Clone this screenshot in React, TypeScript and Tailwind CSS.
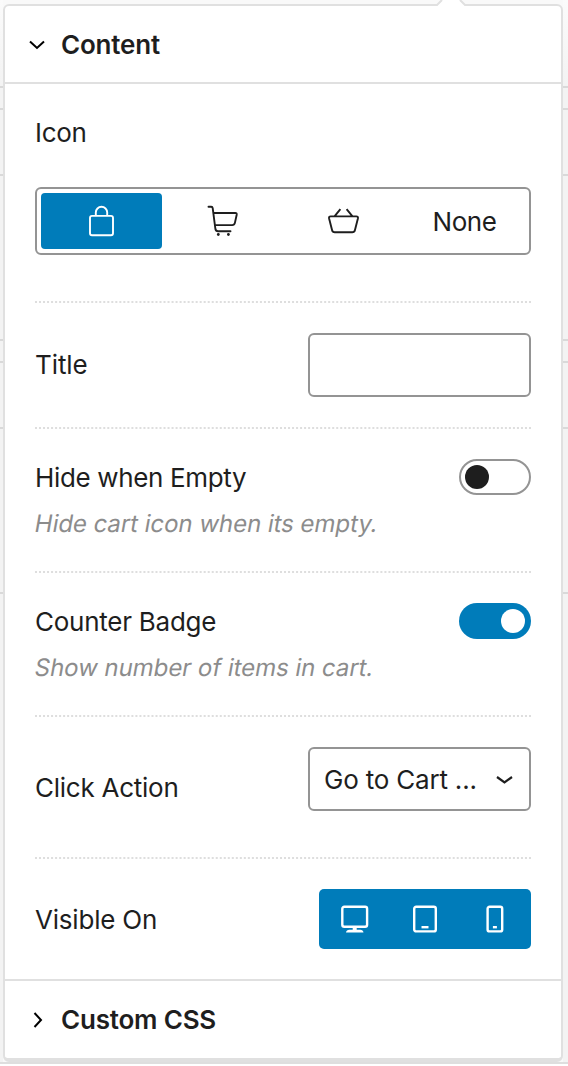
import type { ReactNode } from "react";

function Backdrop({ side }: { side: string }) {
  return (
    <div className={`flex h-[1064px] flex-col border-b-2 border-[#dedede] bg-[#f3f3f3] *:shrink-0 *:border-[#d9d9d9] ${side}`}>
      <div className="h-[88px] border-b-2 bg-linear-to-b from-[#fbfbfb] to-[#f3f3f3]" />
      <div className="h-[22px] border-b-2" />
      <div className="h-[66px] border-b-2" />
      <div className="h-[165px] border-b-2" />
      <div className="h-[22px] border-b-2" />
      <div className="h-[66px] border-b-2" />
      <div className="h-[165px] border-b-2" />
    </div>
  );
}

function Row({ className, children }: { className: string; children: ReactNode }) {
  return <div className={`flex shrink-0 justify-between ${className}`}>{children}</div>;
}

function Dots() {
  return (
    <svg className="block h-[2px] w-[496px] shrink-0" viewBox="0 0 494 2" fill="none" preserveAspectRatio="none">
      <path d="M0 1H494" stroke="#dedede" strokeWidth="2" strokeDasharray="2 2" />
    </svg>
  );
}

function Label({ className, children }: { className: string; children: ReactNode }) {
  return <span className={`block h-8 whitespace-nowrap leading-8 ${className}`}>{children}</span>;
}

function Hint({ children }: { children: ReactNode }) {
  return (
    <Label className="mt-[14px] w-max -skew-x-[10deg] text-[24px] tracking-[-0.05px] text-[#8c8c8c]">{children}</Label>
  );
}

export default function App() {
  return (
    <div className="flex h-[1066px] w-[568px] overflow-hidden bg-white font-['Inter',sans-serif] text-[26px] text-[#1e1e1e]">
      <Backdrop side="w-[3px]" />
      <div className="h-[1064px] w-[560px] shrink-0 border-b-2 border-[#dedede] bg-[#f9f9f9] pt-1">
        <div className="relative flex h-[1058px] w-[560px] flex-col rounded-md border-2 border-b-4 border-[#e0e0e0] bg-white">
          <svg className="absolute left-[430px] top-[-6px]" width="32" height="6" viewBox="0 0 32 6" fill="none">
            <path d="M1 6L7 0H25L31 6Z" fill="#fff" />
            <path d="M0 5H2L7 0M25 0L30 5H32" stroke="#e0e0e0" strokeWidth="2" />
          </svg>

          <div className="flex h-[78px] shrink-0 items-center border-b-2 border-[#e0e0e0] pl-6 pt-[2px]">
            <svg width="16" height="10" viewBox="0 0 16 10" fill="none" stroke="#000" strokeWidth="2">
              <path d="M1 1.5L8 8L15 1.5" />
            </svg>
            <Label className="ml-4 font-semibold tracking-[-0.2px]">Content</Label>
          </div>

          <div className="flex h-[895px] shrink-0 flex-col pl-[30px]">
            <div className="h-[217px] w-[496px] shrink-0 pt-[33px]">
              <Label className="tracking-[-0.3px]">Icon</Label>
              <div className="mt-[38px] grid h-[68px] grid-cols-4 rounded-md border-2 border-[#949494] p-1">
                <div className="flex w-[121px] items-center justify-center rounded-[4px] bg-[#007cba]">
                  <svg width="28" height="32" viewBox="0 0 28 32" fill="none" stroke="#fff" strokeWidth="1.9">
                    <rect x="2" y="10.9" width="23" height="19.3" rx="2" />
                    <path d="M7.8 11V7.5a5.7 5.7 0 0 1 11.4 0V11" />
                  </svg>
                </div>
                <div className="flex items-center justify-center">
                  <svg width="32" height="32" viewBox="0 0 32 32" fill="none" stroke="#1e1e1e" strokeWidth="1.9" strokeLinecap="round" strokeLinejoin="round">
                    <path d="M1.5 1.8H4.2Q5.5 1.8 5.7 3.2L8.4 24Q8.8 26.2 11 26.2H23.5M6.4 8H28.3Q30 8 29.7 9.7L27.9 17.9Q27.4 20.1 25.2 20.1H8.2" />
                    <circle cx="11.3" cy="29.5" r="1.4" fill="#1e1e1e" stroke="none" />
                    <circle cx="21.4" cy="29.5" r="1.4" fill="#1e1e1e" stroke="none" />
                  </svg>
                </div>
                <div className="flex items-center justify-center">
                  <svg width="32" height="32" viewBox="0 0 32 32" fill="none" stroke="#1e1e1e" strokeWidth="1.9" strokeLinejoin="round">
                    <path d="M2.7 11.4H28.3Q30.3 11.4 29.9 13.4L26.9 25.3Q26.4 27.3 24.3 27.3H6.7Q4.6 27.3 4.1 25.3L1.1 13.4Q.7 11.4 2.7 11.4ZM6.7 11.2L12.4 4.2M24.3 11.2L18.6 4.2" />
                  </svg>
                </div>
                <div className="flex items-center justify-center pt-[2px]">
                  <Label className="tracking-[-0.4px]">None</Label>
                </div>
              </div>
            </div>
            <Dots />
            <Row className="h-[124px] w-[496px] items-center">
              <Label className="tracking-[-0.1px]">Title</Label>
              <input aria-label="Title" className="h-16 w-[223px] rounded-md border-2 border-[#949494] bg-white px-3 outline-none" />
            </Row>
            <Dots />
            <Row className="h-[142px] w-[496px] pt-[30px]">
              <div className="pt-[3px]">
                <Label className="tracking-[-0.35px]">Hide when Empty</Label>
                <Hint>Hide cart icon when its empty.</Hint>
              </div>
              <div className="flex h-9 w-[72px] items-center rounded-full border-2 border-[#949494] pl-1">
                <div className="size-6 rounded-full bg-[#1e1e1e]" />
              </div>
            </Row>
            <Dots />
            <Row className="h-[142px] w-[496px] pt-[30px]">
              <div className="pt-[3px]">
                <Label className="tracking-[-0.25px]">Counter Badge</Label>
                <Hint>Show number of items in cart.</Hint>
              </div>
              <div className="flex h-9 w-[72px] items-center justify-end rounded-full bg-[#007cba] pr-[6px]">
                <div className="size-6 rounded-full bg-white" />
              </div>
            </Row>
            <Dots />
            <Row className="h-[140px] w-[496px] pt-[30px]">
              <Label className="mt-[25px] tracking-[-0.25px]">Click Action</Label>
              <div className="flex h-16 w-[223px] items-center justify-between rounded-md border-2 border-[#949494] pl-[14px] pr-4 pt-[2px]">
                <Label className="tracking-[-0.2px]">Go to Cart ...</Label>
                <svg width="17" height="10" viewBox="0 0 17 10" fill="none" stroke="#1e1e1e" strokeWidth="2.2">
                  <path d="M1 2L8.5 7.5L16 2" />
                </svg>
              </div>
            </Row>
            <Dots />
            <Row className="h-[120px] w-[496px] items-center">
              <Label className="mt-[2px] tracking-[-0.2px]">Visible On</Label>
              <div className="grid h-[60px] w-[212px] grid-cols-3 place-items-center rounded-[5px] bg-[#007cba] *:block">
                <svg width="30" height="28" viewBox="0 0 30 28" fill="none" stroke="#fff" strokeWidth="2.4">
                  <rect x="3.3" y="1.8" width="24.8" height="20" rx="2" />
                  <path d="M15.7 22v4" strokeWidth="4" />
                  <path d="M7 27.6Q7.5 24.8 10.3 24.8h11Q24 24.8 24.5 27.6Z" fill="#fff" stroke="none" />
                </svg>
                <svg width="26" height="28" viewBox="0 0 26 28" fill="none" stroke="#fff" strokeWidth="2.4">
                  <rect x="2.2" y="1.8" width="21.6" height="24.6" rx="2" />
                  <path d="M9.5 22.2h7" />
                </svg>
                <svg width="20" height="28" viewBox="0 0 20 28" fill="none" stroke="#fff" strokeWidth="2.4">
                  <rect x="1.6" y="1.8" width="14.6" height="24.6" rx="2" />
                  <path d="M6.9 22.2h4" />
                </svg>
              </div>
            </Row>
          </div>

          <div className="flex min-h-0 flex-1 items-center border-t-2 border-[#e0e0e0] pl-7">
            <svg width="10" height="16" viewBox="0 0 10 16" fill="none" stroke="#000" strokeWidth="2">
              <path d="M1.5 1L8 8L1.5 15" />
            </svg>
            <Label className="ml-[18px] font-semibold tracking-[-0.2px]">Custom CSS</Label>
          </div>
        </div>
      </div>
      <Backdrop side="w-[5px]" />
    </div>
  );
}
